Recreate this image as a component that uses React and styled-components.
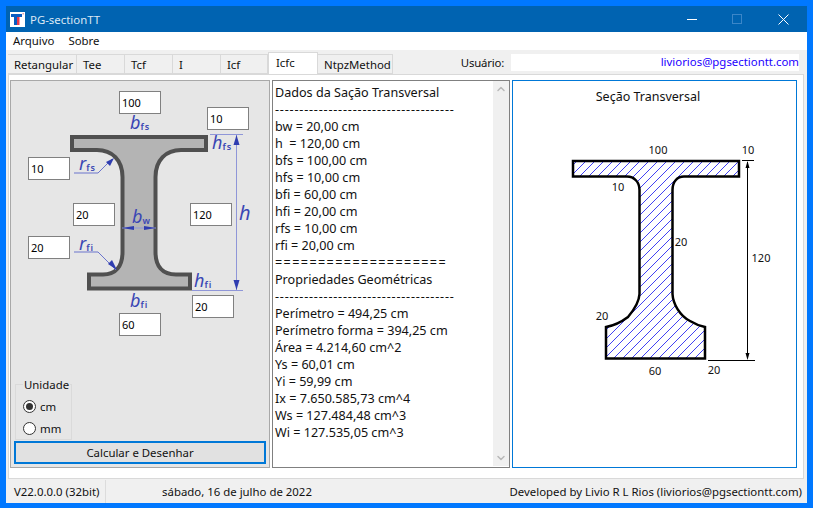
import React from 'react';
import styled, { createGlobalStyle } from 'styled-components';
import { ChevronUp, ChevronDown } from 'lucide-react';

const tabs = [
  { label: 'Retangular', width: 69 },
  { label: 'Tee', width: 48 },
  { label: 'Tcf', width: 48 },
  { label: 'I', width: 48 },
  { label: 'Icf', width: 47 },
  { label: 'Icfc', width: 50, active: true },
  { label: 'NtpzMethod', width: 75 },
];

const inputs = [
  { value: '100', x: 108, y: 10 },
  { value: '10', x: 196, y: 26 },
  { value: '10', x: 17, y: 76 },
  { value: '20', x: 62, y: 122 },
  { value: '120', x: 179, y: 122 },
  { value: '20', x: 17, y: 155 },
  { value: '20', x: 181, y: 214 },
  { value: '60', x: 108, y: 232 },
];

const report = [
  { text: 'Dados da Sação Transversal' },
  { text: '-------------------------------------', spacing: 0.8 },
  { text: 'bw = 20,00 cm' },
  { text: 'h  = 120,00 cm' },
  { text: 'bfs = 100,00 cm' },
  { text: 'hfs = 10,00 cm' },
  { text: 'bfi = 60,00 cm' },
  { text: 'hfi = 20,00 cm' },
  { text: 'rfs = 10,00 cm' },
  { text: 'rfi = 20,00 cm' },
  { text: '====================', spacing: 1.4 },
  { text: 'Propriedades Geométricas' },
  { text: '-------------------------------------', spacing: 0.8 },
  { text: 'Perímetro = 494,25 cm' },
  { text: 'Perímetro forma = 394,25 cm' },
  { text: 'Área = 4.214,60 cm^2' },
  { text: 'Ys = 60,01 cm' },
  { text: 'Yi = 59,99 cm' },
  { text: 'Ix = 7.650.585,73 cm^4' },
  { text: 'Ws = 127.484,48 cm^3' },
  { text: 'Wi = 127.535,05 cm^3' },
];

const AppIcon = () => (
  <svg width="15" height="15" viewBox="0 0 15 15">
    <rect width="15" height="15" fill="#fff" />
    <rect x="1" y="2" width="11" height="3" fill="#0a5cc0" />
    <rect x="4" y="2" width="3" height="11" fill="#0a5cc0" />
    <rect x="7" y="5" width="2.500" height="8" fill="#e8384a" />
    <rect x="12.500" y="1" width="1.500" height="1.500" fill="#e8a0a8" />
  </svg>
);

const WindowButtons = () => (
  <svg width="120" height="26" viewBox="0 0 120 26">
    <path d="M0 13.500H10" stroke="#fff" strokeWidth="1" />
    <rect x="45.500" y="8.500" width="9" height="9" fill="none" stroke="#3b86c8" strokeWidth="1" />
    <path d="M91.500 8.500L101.500 18.500M101.500 8.500L91.500 18.500" stroke="#fff" strokeWidth="1" />
  </svg>
);

const SectionDiagram = () => (
  <DiagramSvg width="258" height="300" viewBox="11 81 258 300">
    <path
      d="M72 137H206V150H181C166 150 155.500 160 155.500 177V252C155.500 266 162 274.500 176 274.500H190V288.500H89V274.500H103C116 274.500 122.500 266 122.500 252V177C122.500 160 112 150 97 150H72Z"
      fill="#b4b4b4"
      stroke="#505050"
      strokeWidth="4"
    />
    <g stroke="#8f96d8" strokeWidth="1" fill="none">
      <path d="M210 134.500H243M192 290.500H243M236.500 135V290" />
      <path d="M74 173H98L112 159M74 252H98L116 270" stroke="#6b74cc" />
      <path d="M122 228H156" />
    </g>
    <g fill="#2f3db0">
      <path d="M236.500 135L233.500 145H239.500Z" />
      <path d="M236.500 290L233.500 280H239.500Z" />
      <path d="M122 228L134 226V230Z" />
      <path d="M156 228L144 226V230Z" />
      <path d="M114 158L106 162L110 166Z" />
      <path d="M117 270L108 264L112 260Z" />
    </g>
    <Symbol x="130" y="129">b<Sub dy="1">fs</Sub></Symbol>
    <Symbol x="212" y="149">h<Sub dy="1">fs</Sub></Symbol>
    <Symbol x="79" y="170">r<Sub dy="1">fs</Sub></Symbol>
    <Symbol x="132" y="223">b<Sub dy="1">w</Sub></Symbol>
    <Symbol x="239" y="220" $large>h</Symbol>
    <Symbol x="79" y="250">r<Sub dy="1">fi</Sub></Symbol>
    <Symbol x="194" y="287">h<Sub dy="1">fi</Sub></Symbol>
    <Symbol x="130" y="307">b<Sub dy="1">fi</Sub></Symbol>
  </DiagramSvg>
);

const SectionDrawing = () => (
  <svg width="283" height="330" viewBox="513 81 283 330">
    <defs>
      <pattern id="hatch" width="9" height="9" patternUnits="userSpaceOnUse">
        <path d="M-1 10L10 -1" stroke="#1010f0" strokeWidth="0.8" />
      </pattern>
    </defs>
    <path
      d="M573 161H739V176.500H684C677 176.500 672.500 182 672.500 190V294C673 304 680 316 690 321C695 324 700 326 705 327V358.500H606V327C612 326 620 323 628 317C634 310 639 303 639.500 294V190C639.500 182 634 176.500 627 176.500H573Z"
      fill="url(#hatch)"
      stroke="#000"
      strokeWidth="2.500"
    />
    <path d="M742 160.500H754M708 360.500H755M747.500 162V358" stroke="#000" fill="none" />
    <path d="M747.500 161L745.500 168H749.500ZM747.500 360L745.500 353H749.500Z" fill="#000" />
    <DrawingText x="648" y="101" textAnchor="middle" $size={12.5}>Seção Transversal</DrawingText>
    <DrawingText x="658" y="154" textAnchor="middle">100</DrawingText>
    <DrawingText x="748" y="154" textAnchor="middle">10</DrawingText>
    <DrawingText x="618" y="191" textAnchor="middle">10</DrawingText>
    <DrawingText x="681" y="246" textAnchor="middle">20</DrawingText>
    <DrawingText x="761" y="262" textAnchor="middle">120</DrawingText>
    <DrawingText x="602" y="320" textAnchor="middle">20</DrawingText>
    <DrawingText x="655" y="375" textAnchor="middle">60</DrawingText>
    <DrawingText x="714" y="374" textAnchor="middle">20</DrawingText>
  </svg>
);

export default function App() {
  return (
    <Screen>
      <GlobalStyle />
      <Window>
        <TitleBar>
          <AppIcon />
          <TitleText>PG-sectionTT</TitleText>
          <WindowButtons />
        </TitleBar>
        <MenuBar>
          <MenuItem>Arquivo</MenuItem>
          <MenuItem>Sobre</MenuItem>
        </MenuBar>
        <TabRow>
          <TabList>
            {tabs.map((tab) => (
              <Tab key={tab.label} $width={tab.width} $active={tab.active}>
                {tab.label}
              </Tab>
            ))}
          </TabList>
          <UserLabel>Usuário:</UserLabel>
          <UserField>liviorios@pgsectiontt.com</UserField>
        </TabRow>
        <TabPane>
          <InputPanel>
            <DiagramCanvas>
              <SectionDiagram />
              {inputs.map((input, i) => (
                <DimInput key={i} $x={input.x} $y={input.y} defaultValue={input.value} />
              ))}
            </DiagramCanvas>
            <UnitGroup>
              <UnitLegend>Unidade</UnitLegend>
              <RadioRow>
                <Radio $checked />
                cm
              </RadioRow>
              <RadioRow>
                <Radio />
                mm
              </RadioRow>
            </UnitGroup>
            <CalcButton>Calcular e Desenhar</CalcButton>
          </InputPanel>
          <ReportPanel>
            <ReportText>
              {report.map((line, i) => (
                <ReportLine key={i} $spacing={line.spacing}>{line.text}</ReportLine>
              ))}
            </ReportText>
            <ScrollBar>
              <ChevronUp size={12} color="#b8b8b8" strokeWidth={3} />
              <ChevronDown size={12} color="#b8b8b8" strokeWidth={3} />
            </ScrollBar>
          </ReportPanel>
          <DrawingPanel>
            <SectionDrawing />
          </DrawingPanel>
        </TabPane>
        <StatusBar>
          <VersionCell>V22.0.0.0 (32bit)</VersionCell>
          <DateCell>sábado, 16 de julho de 2022</DateCell>
          <CreditCell>Developed by Livio R L Rios (liviorios@pgsectiontt.com)</CreditCell>
        </StatusBar>
      </Window>
    </Screen>
  );
}

const GlobalStyle = createGlobalStyle`
  html, body {
    margin: 0;
    padding: 0;
    background: #0078ff;
  }
  * {
    box-sizing: border-box;
  }
`;

const Screen = styled.div`
  width: 813px;
  height: 508px;
  padding: 6px 6px 5px 6px;
  background: #0078ff;
  font-family: "Noto Sans", "Open Sans", sans-serif;
  font-size: 11.4px;
  color: #111;
  overflow: hidden;
`;

const Window = styled.div`
  height: 100%;
  display: flex;
  flex-direction: column;
  background: #f0f0f0;
`;

const TitleBar = styled.div`
  height: 26px;
  flex: none;
  display: flex;
  align-items: center;
  padding-left: 4px;
  background: #0063b1;
`;

const TitleText = styled.div`
  flex: 1;
  margin-left: 5px;
  color: #dbe8f4;
`;

const MenuBar = styled.div`
  height: 18px;
  flex: none;
  display: flex;
  align-items: center;
  gap: 14px;
  padding-left: 7px;
  background: #fff;
`;

const MenuItem = styled.span`
  line-height: 18px;
`;

const TabRow = styled.div`
  height: 24px;
  flex: none;
  display: flex;
  align-items: flex-end;
  padding-left: 2px;
`;

const TabList = styled.div`
  display: flex;
  align-items: flex-end;
  flex: 1;
`;

const Tab = styled.div`
  width: ${(p) => p.$width}px;
  height: ${(p) => (p.$active ? 22 : 20)}px;
  padding: ${(p) => (p.$active ? '0 0 3px 7px' : '0 0 0 6px')};
  line-height: 20px;
  background: ${(p) => (p.$active ? '#fff' : '#f0f0f0')};
  border: 1px solid #d9d9d9;
  border-bottom: ${(p) => (p.$active ? 'none' : '1px solid #d9d9d9')};
  border-left: ${(p) => (p.$active ? '1px solid #d9d9d9' : 'none')};
  white-space: nowrap;
`;

const UserLabel = styled.div`
  align-self: center;
  margin: 0 7px 0 0;
  letter-spacing: -0.2px;
`;

const UserField = styled.div`
  width: 288px;
  height: 17px;
  align-self: center;
  margin-right: 8px;
  text-align: right;
  line-height: 16px;
  color: #2200ff;
  background: #fff;
`;

const TabPane = styled.div`
  flex: 1;
  display: flex;
  gap: 2px;
  margin: 0 3px 1px 2px;
  padding: 5px 6px 10px 1px;
  background: #fff;
  border: 1px solid #d9d9d9;
`;

const InputPanel = styled.div`
  width: 260px;
  display: flex;
  flex-direction: column;
  padding: 0 3px 3px 3px;
  background: #e6e6e6;
  border: 1px solid #a8a8a8;
`;

const DiagramCanvas = styled.div`
  position: relative;
  flex: 1;
  margin: 0 -3px;
`;

const DiagramSvg = styled.svg`
  display: block;
`;

const Symbol = styled.text`
  font-family: "Noto Sans", sans-serif;
  font-style: italic;
  font-size: ${(p) => (p.$large ? 20 : 18)}px;
  fill: #3a46b4;
`;

const Sub = styled.tspan`
  font-size: 9px;
  font-style: normal;
  font-weight: 600;
  letter-spacing: 1px;
`;

const DimInput = styled.input`
  position: absolute;
  left: ${(p) => p.$x}px;
  top: ${(p) => p.$y}px;
  width: 42px;
  height: 23px;
  padding: 0 0 0 2px;
  border: 1px solid #808080;
  background: #fff;
  font: inherit;
  font-size: 11px;
  color: #000;
  outline: none;
`;

const UnitGroup = styled.div`
  position: relative;
  width: 57px;
  height: 56px;
  flex: none;
  margin-left: 1px;
  padding: 10px 0 0 7px;
  border: 1px solid #dadada;
`;

const UnitLegend = styled.div`
  position: absolute;
  top: -8px;
  left: 7px;
  padding: 0 1px;
  line-height: 16px;
  background: #e6e6e6;
`;

const RadioRow = styled.div`
  height: 22px;
  display: flex;
  align-items: center;
  gap: 4px;
`;

const Radio = styled.span`
  width: 13px;
  height: 13px;
  flex: none;
  display: flex;
  align-items: center;
  justify-content: center;
  border: 1px solid #333;
  border-radius: 50%;
  background: #fff;

  &::after {
    content: '';
    width: 7px;
    height: 7px;
    border-radius: 50%;
    background: ${(p) => (p.$checked ? '#333' : 'transparent')};
  }
`;

const CalcButton = styled.button`
  height: 23px;
  flex: none;
  margin-top: 1px;
  padding: 0;
  border: 2px solid #0078d7;
  background: #e1e1e1;
  font: inherit;
  color: #111;
`;

const ReportPanel = styled.div`
  width: 238px;
  display: flex;
  background: #fff;
  border: 1px solid #808080;
`;

const ReportText = styled.div`
  flex: 1;
  padding: 3px 0 0 2px;
  font-size: 12.6px;
`;

const ReportLine = styled.div`
  height: 17px;
  line-height: 17px;
  white-space: pre;
  letter-spacing: ${(p) => p.$spacing || 0}px;
`;

const ScrollBar = styled.div`
  width: 16px;
  margin: 0 0 1px 0;
  display: flex;
  flex-direction: column;
  justify-content: space-between;
  align-items: center;
  padding: 2px 0;
  background: #f0f0f0;
`;

const DrawingPanel = styled.div`
  width: 285px;
  background: #fff;
  border: 1px solid #0078d7;
`;

const DrawingText = styled.text`
  font-family: "Noto Sans", sans-serif;
  font-size: ${(p) => p.$size || 11}px;
  fill: #111;
`;

const StatusBar = styled.div`
  height: 23px;
  flex: none;
  display: flex;
  align-items: center;
  background: #f0f0f0;
`;

const VersionCell = styled.div`
  width: 100px;
  height: 100%;
  padding-left: 8px;
  line-height: 23px;
  white-space: nowrap;
  border-right: 1px solid #dcdcdc;
`;

const DateCell = styled.div`
  width: 262px;
  text-align: center;
  white-space: nowrap;
`;

const CreditCell = styled.div`
  flex: 1;
  text-align: right;
  padding-right: 5px;
  white-space: nowrap;
`;
